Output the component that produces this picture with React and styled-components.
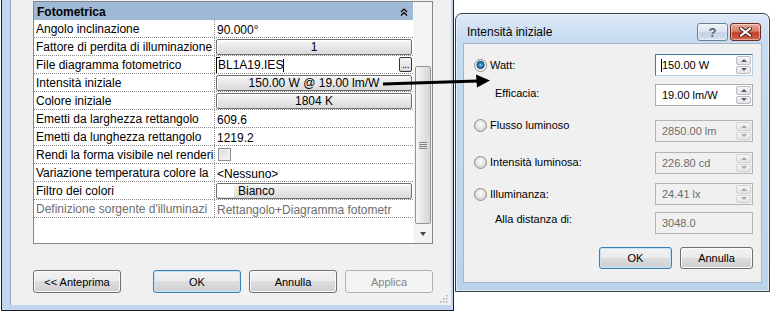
import React from "react";
import styled, { createGlobalStyle } from "styled-components";

const GlobalStyle = createGlobalStyle`
  html, body {
    margin: 0;
    padding: 0;
    background: #fff;
  }
  body {
    width: 774px;
    height: 315px;
    overflow: hidden;
    font-family: "Liberation Sans", Arial, sans-serif;
    font-size: 12px;
    color: #000;
  }
  * {
    box-sizing: border-box;
  }
`;

const Desktop = styled.div`
  position: relative;
  width: 774px;
  height: 315px;
  overflow: hidden;
  background: #fff;
`;

/* ---------- left window: property palette ---------- */

const LeftWindow = styled.div`
  position: absolute;
  left: 1px;
  top: -1px;
  width: 453px;
  height: 312px;
  display: flex;
  padding: 0 2px 5px 8px;
  border: 1px solid #1e1e1e;
  background: #c2d7ee;
`;

const WindowBody = styled.div`
  position: relative;
  flex: 1;
  display: flex;
  flex-direction: column;
  padding: 1px 0 0 22px;
  background: #f0f0f0;
  border-left: 1px solid #8fa5c0;
`;

const PropGrid = styled.div`
  width: 400px;
  height: 243px;
  display: flex;
  border: 1px solid #828790;
  background: #fff;
`;

const Table = styled.div`
  flex: 1;
  min-width: 0;
  display: flex;
  flex-direction: column;
`;

const GroupHeader = styled.div`
  height: 18px;
  display: flex;
  align-items: center;
  justify-content: space-between;
  padding: 1px 5px 0 3px;
  background: #a0b9d6;
  font-weight: bold;
`;

const Row = styled.div`
  height: 18px;
  display: flex;
  border-bottom: 1px dotted #8c8c8c;
`;

const Label = styled.div`
  width: 181px;
  padding-left: 2px;
  line-height: 19px;
  white-space: nowrap;
  overflow: hidden;
  border-right: 1px dotted #8c8c8c;
  color: ${(p) => (p.$disabled ? "#6d6d6d" : "#000")};
`;

const Value = styled.div`
  flex: 1;
  min-width: 0;
  display: flex;
  align-items: center;
  padding: 0 1px;
  white-space: nowrap;
  overflow: hidden;
  color: ${(p) => (p.$disabled ? "#6d6d6d" : "#000")};
`;

const ValueText = styled.span`
  padding-left: 1px;
  margin-top: 2px;
`;

const PropButton = styled.div`
  flex: 1;
  height: 16px;
  display: flex;
  align-items: center;
  justify-content: ${(p) => (p.$left ? "flex-start" : "center")};
  padding: 1px 0 0 ${(p) => (p.$left ? "1px" : "0")};
  line-height: 14px;
  border: 1px solid #6f6f6f;
  border-radius: 2px;
  background: linear-gradient(#f7f7f7, #e6e6e6 55%, #d9d9d9);
  box-shadow: inset 1px 1px 0 #fff;
`;

const Swatch = styled.span`
  width: 16px;
  height: 13px;
  margin: -1px 4px 0 0;
  background: #fff;
`;

const FileField = styled.div`
  position: relative;
  flex: 1;
  height: 16px;
  display: flex;
  align-items: center;
  padding: 1px 0 0 2px;

  &::before {
    content: "";
    position: absolute;
    left: 0;
    top: 0;
    width: 3px;
    height: 16px;
    border: 1px solid #000;
    border-right: none;
  }
`;

const Caret = styled.span`
  width: 1px;
  height: 13px;
  background: #000;
  margin: ${(p) => p.$margin || "0"};
`;

const EllipsisButton = styled.span`
  margin: -1px 0 0 auto;
  width: 13px;
  height: 15px;
  display: flex;
  align-items: flex-end;
  justify-content: center;
  padding-bottom: 3px;
  border: 1px solid #333;
  border-radius: 2px;
  background: linear-gradient(#f6f6f6, #dcdcdc);
  font-size: 10px;
  line-height: 6px;
  letter-spacing: -0.5px;
`;

const CheckBox = styled.span`
  width: 13px;
  height: 13px;
  margin-left: 2px;
  border: 1px solid #8f8f8f;
  background: linear-gradient(135deg, #d8d8d8, #f9f9f9);
  box-shadow: inset 0 0 0 1px #f2f2f2;
`;

const Filler = styled.div`
  flex: 1;
`;

const Scrollbar = styled.div`
  width: 19px;
  display: flex;
  flex-direction: column;
  background: #f3f3f3;
  border-left: 1px solid #fafafa;
`;

const Track = styled.div`
  flex: 1;
  padding: 64px 1px 0 1px;
`;

const Thumb = styled.div`
  height: 158px;
  display: flex;
  align-items: center;
  justify-content: center;
  border: 1px solid #959595;
  border-radius: 2px;
  background: linear-gradient(to right, #f6f6f6, #e7e7e7 45%, #d6d6d6);
`;

const Grip = styled.span`
  width: 8px;
  height: 7px;
  background: repeating-linear-gradient(#848484 0 1px, transparent 1px 2px);
`;

const ArrowButton = styled.div`
  height: 18px;
  display: flex;
  align-items: center;
  justify-content: center;
`;

const DownTriangle = styled.span`
  width: 0;
  height: 0;
  border-left: 3.5px solid transparent;
  border-right: 3.5px solid transparent;
  border-top: 4px solid #444;
`;

const ButtonRow = styled.div`
  display: flex;
  gap: ${(p) => p.$gap || 8}px;
  justify-content: ${(p) => (p.$end ? "flex-end" : "flex-start")};
  margin-top: ${(p) => p.$top}px;
`;

const WinButton = styled.button`
  width: ${(p) => p.$w}px;
  height: ${(p) => p.$h}px;
  margin-right: ${(p) => p.$after || 0}px;
  padding: 0;
  font-family: "Liberation Sans", Arial, sans-serif;
  font-size: 11px;
  color: ${(p) => (p.disabled ? "#838383" : "#000")};
  border: 1px solid
    ${(p) => (p.$default ? "#3c7fb1" : p.disabled ? "#adb2b5" : "#707070")};
  border-radius: 3px;
  background: ${(p) =>
    p.disabled
      ? "#f4f4f4"
      : "linear-gradient(#f2f2f2 0%, #ebebeb 50%, #dddddd 50%, #cfcfcf 100%)"};
  box-shadow: ${(p) =>
    p.disabled
      ? "none"
      : p.$default
      ? "inset 0 0 0 1px #bfe4f8"
      : "inset 0 0 0 1px #fbfbfb"};
`;

const ResizeGrip = styled.svg`
  position: absolute;
  right: 3px;
  bottom: 2px;
`;

/* ---------- right window: Intensità iniziale dialog ---------- */

const Dialog = styled.div`
  position: absolute;
  left: 455px;
  top: 13px;
  width: 315px;
  height: 279px;
  display: flex;
  flex-direction: column;
  border: 1px solid #343f4c;
  border-radius: 7px 7px 0 0;
  background: linear-gradient(#dce9f7, #c6dbf1 28px, #bcd3ec);
  box-shadow: inset 0 0 0 1px rgba(255, 255, 255, 0.55);
`;

const TitleBar = styled.div`
  height: 29px;
  display: flex;
  align-items: center;
  gap: 2px;
  padding: 7px 8px 0 11px;
`;

const TitleText = styled.span`
  flex: 1;
  font-size: 12px;
  color: #000;
`;

const CaptionButton = styled.span`
  width: 31px;
  height: 18px;
  display: flex;
  align-items: center;
  justify-content: center;
  border: 1px solid ${(p) => (p.$close ? "#6b2a22" : "#6e7f95")};
  border-radius: 3px;
  background: ${(p) =>
    p.$close
      ? "linear-gradient(#e9a99b, #d47f6c 45%, #c0402c 55%, #d0634a)"
      : "linear-gradient(#eef3f9, #dbe5f1 45%, #c4d3e6 55%, #d2e0ef)"};
  box-shadow: inset 0 0 0 1px rgba(255, 255, 255, 0.45);
  font-weight: bold;
  font-size: 13px;
  color: #4f5966;
  text-shadow: 0 0 1px #fff;
`;

const DialogBody = styled.div`
  flex: 1;
  display: flex;
  flex-direction: column;
  margin: 0 7px 8px 7px;
  padding: 10px 8px 0 10px;
  background: #f0f0f0;
  border: 1px solid #a4b5ca;
  font-size: 11px;
`;

const FormRow = styled.div`
  height: 22px;
  display: flex;
  align-items: flex-start;
  margin-top: ${(p) => p.$top}px;
`;

const FieldLabel = styled.div`
  width: 181px;
  display: flex;
  align-items: center;
  gap: 3px;
  line-height: 14px;
  padding-left: ${(p) => p.$indent || 0}px;
  margin-top: ${(p) => p.$offset || 0}px;
`;

const Radio = styled.span`
  width: 13px;
  height: 13px;
  border-radius: 50%;
  border: 1px solid #8e8f8f;
  background: ${(p) =>
    p.$checked
      ? "radial-gradient(circle at 50% 45%, #a6e3ff 0, #2e93d4 1.5px, #195a8a 3.2px, #3a4f63 3.8px, #e4e4e4 4.3px, #f9f9f9 6px)"
      : "radial-gradient(circle at 50% 40%, #ffffff 0, #ececec 3px, #d6d6d6 6px)"};
`;

const SpinBox = styled.div`
  width: 98px;
  height: 22px;
  display: flex;
  border: 1px solid #abadb3;
  border-color: ${(p) =>
    p.$focused ? "#3d7bad #b5cfe7 #b5cfe7 #3d7bad" : p.$disabled ? "#b4b4b4" : "#abadb3"};
  background: ${(p) => (p.$disabled ? "#f0f0f0" : "#fff")};
  color: ${(p) => (p.$disabled ? "#6d6d6d" : "#000")};
`;

const Field = styled.div`
  flex: 1;
  display: flex;
  align-items: center;
  padding-left: 6px;
  white-space: nowrap;
`;

const Spinner = styled.div`
  width: 17px;
  display: flex;
  flex-direction: column;
  gap: 1px;
  padding: 1px;
`;

const SpinButton = styled.span`
  flex: 1;
  display: flex;
  align-items: center;
  justify-content: center;
  border: 1px solid ${(p) => (p.$disabled ? "#d3d3d3" : "#bdbdbd")};
  border-radius: 2px;
  background: linear-gradient(#f7f7f7, #e3e3e3);
`;

const SpinArrow = styled.span`
  width: 0;
  height: 0;
  border-left: 3px solid transparent;
  border-right: 3px solid transparent;
  ${(p) => (p.$down ? "border-top" : "border-bottom")}: 3px solid
    ${(p) => (p.$disabled ? "#a7a7a7" : "#4c5f7d")};
`;

const ArrowOverlay = styled.svg`
  position: absolute;
  left: 0;
  top: 0;
  z-index: 10;
  pointer-events: none;
`;

const rows = [
  { label: "Angolo inclinazione", text: "90.000°" },
  { label: "Fattore di perdita di illuminazione", button: "1" },
  { label: "File diagramma fotometrico", file: "BL1A19.IES" },
  { label: "Intensità iniziale", button: "150.00 W @ 19.00 lm/W" },
  { label: "Colore iniziale", button: "1804 K" },
  { label: "Emetti da larghezza rettangolo", text: "609.6" },
  { label: "Emetti da lunghezza rettangolo", text: "1219.2" },
  { label: "Rendi la forma visibile nel renderi", check: true },
  { label: "Variazione temperatura colore la", text: "<Nessuno>" },
  { label: "Filtro dei colori", swatch: "Bianco" },
  {
    label: "Definizione sorgente d'illuminazi",
    text: "Rettangolo+Diagramma fotometr",
    disabled: true,
  },
];

const Spin = ({ value, focused, disabled, noSpin }) => (
  <SpinBox $focused={focused} $disabled={disabled}>
    <Field>
      {focused && <Caret $margin="0 0 0 -1px" />}
      {value}
    </Field>
    {!noSpin && (
      <Spinner>
        <SpinButton $disabled={disabled}>
          <SpinArrow $disabled={disabled} />
        </SpinButton>
        <SpinButton $disabled={disabled}>
          <SpinArrow $down $disabled={disabled} />
        </SpinButton>
      </Spinner>
    )}
  </SpinBox>
);

const renderValue = (r) => {
  if (r.button) return <PropButton>{r.button}</PropButton>;
  if (r.swatch)
    return (
      <PropButton $left>
        <Swatch />
        {r.swatch}
      </PropButton>
    );
  if (r.check) return <CheckBox />;
  if (r.file)
    return (
      <FileField>
        {r.file}
        <Caret />
        <EllipsisButton>...</EllipsisButton>
      </FileField>
    );
  return <ValueText>{r.text}</ValueText>;
};

export default function App() {
  return (
    <Desktop>
      <GlobalStyle />

      <LeftWindow>
        <WindowBody>
          <PropGrid>
            <Table>
              <GroupHeader>
                Fotometrica
                <svg width="8" height="8" viewBox="0 0 8 8">
                  <path
                    d="M1 4 L4 1 L7 4 M1 7.5 L4 4.5 L7 7.5"
                    fill="none"
                    stroke="#000"
                    strokeWidth="1.2"
                  />
                </svg>
              </GroupHeader>
              {rows.map((r) => (
                <Row key={r.label}>
                  <Label $disabled={r.disabled}>{r.label}</Label>
                  <Value $disabled={r.disabled}>{renderValue(r)}</Value>
                </Row>
              ))}
              <Filler />
            </Table>
            <Scrollbar>
              <Track>
                <Thumb>
                  <Grip />
                </Thumb>
              </Track>
              <ArrowButton>
                <DownTriangle />
              </ArrowButton>
            </Scrollbar>
          </PropGrid>

          <ButtonRow $top={26}>
            <WinButton $w={88} $h={23} $after={24}>
              &lt;&lt; Anteprima
            </WinButton>
            <WinButton $w={88} $h={23} $default>
              OK
            </WinButton>
            <WinButton $w={88} $h={23}>
              Annulla
            </WinButton>
            <WinButton $w={88} $h={23} disabled>
              Applica
            </WinButton>
          </ButtonRow>

          <ResizeGrip width="9" height="9" viewBox="0 0 9 9">
            {[
              [7, 1],
              [7, 4],
              [4, 4],
              [7, 7],
              [4, 7],
              [1, 7],
            ].map(([x, y]) => (
              <rect key={`${x}-${y}`} x={x} y={y} width="1.5" height="1.5" fill="#a9a9a9" />
            ))}
          </ResizeGrip>
        </WindowBody>
      </LeftWindow>

      <Dialog>
        <TitleBar>
          <TitleText>Intensità iniziale</TitleText>
          <CaptionButton>?</CaptionButton>
          <CaptionButton $close>
            <svg width="13" height="10" viewBox="0 0 13 10">
              <path d="M2 1.5 L11 8.5 M11 1.5 L2 8.5" stroke="#4a1c15" strokeWidth="4" strokeLinecap="square" />
              <path d="M2 1.5 L11 8.5 M11 1.5 L2 8.5" stroke="#fff" strokeWidth="2" strokeLinecap="square" />
            </svg>
          </CaptionButton>
        </TitleBar>

        <DialogBody>
          <FormRow $top={0}>
            <FieldLabel $offset={4}>
              <Radio $checked />
              Watt:
            </FieldLabel>
            <Spin value="150.00 W" focused />
          </FormRow>
          <FormRow $top={8}>
            <FieldLabel $offset={2} $indent={21}>
              Efficacia:
            </FieldLabel>
            <Spin value="19.00 lm/W" />
          </FormRow>
          <FormRow $top={14}>
            <FieldLabel $offset={-2}>
              <Radio />
              Flusso luminoso
            </FieldLabel>
            <Spin value="2850.00 lm" disabled />
          </FormRow>
          <FormRow $top={10}>
            <FieldLabel $offset={3}>
              <Radio />
              Intensità luminosa:
            </FieldLabel>
            <Spin value="226.80 cd" disabled />
          </FormRow>
          <FormRow $top={9}>
            <FieldLabel $offset={4}>
              <Radio />
              Illuminanza:
            </FieldLabel>
            <Spin value="24.41 lx" disabled />
          </FormRow>
          <FormRow $top={7}>
            <FieldLabel $offset={0} $indent={21}>
              Alla distanza di:
            </FieldLabel>
            <Spin value="3048.0" disabled noSpin />
          </FormRow>

          <ButtonRow $top={13} $end>
            <WinButton $w={73} $h={22} $default>
              OK
            </WinButton>
            <WinButton $w={73} $h={22}>
              Annulla
            </WinButton>
          </ButtonRow>
        </DialogBody>
      </Dialog>

      <ArrowOverlay width="774" height="315" viewBox="0 0 774 315">
        <path d="M383 84 L478 81" stroke="#000" strokeWidth="3.2" />
        <polygon points="476,74.5 490,80.5 477,87.5" fill="#000" />
      </ArrowOverlay>
    </Desktop>
  );
}
